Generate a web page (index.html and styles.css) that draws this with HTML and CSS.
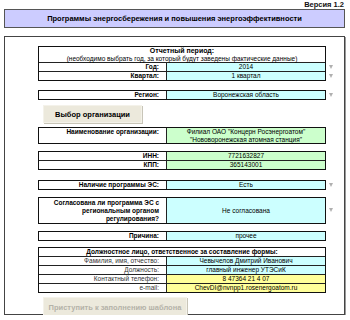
FILE: index.html
```html
<!DOCTYPE html>
<html lang="ru">
  <head>
    <meta charset="UTF-8" />
    <title>Программы энергосбережения</title>
    <link rel="stylesheet" href="styles.css">
  </head>
  <body>
    <div class="version">Версия 1.2</div>
    <div class="title">Программы энергосбережения и повышения энергоэффективности</div>

    <div class="panel">
      <div class="line">
        <div class="box period">
          <div class="head">
            <b>Отчетный период:</b>
            <span>(необходимо выбрать год, за который будут заведены фактические данные)</span>
          </div>
          <div class="row"><div class="lbl">Год:</div><div class="val cyan">2014</div></div>
          <div class="row"><div class="lbl">Квартал:</div><div class="val cyan">1 квартал</div></div>
        </div>
        <div class="arrows">
          <span class="arrow a-top"></span>
          <span class="arrow"></span>
        </div>
      </div>

      <div class="line gap-region">
        <div class="box">
          <div class="row"><div class="lbl">Регион:</div><div class="val cyan">Воронежская область</div></div>
        </div>
        <span class="arrow"></span>
      </div>

      <button class="btn btn-org" type="button">Выбор организации</button>

      <div class="line gap-org">
        <div class="box">
          <div class="row tall"><div class="lbl">Наименование организации:</div><div class="val green two">Филиал ОАО "Концерн Росэнергоатом"<br>"Нововоронежская атомная станция"</div></div>
        </div>
      </div>

      <div class="line gap-inn">
        <div class="box">
          <div class="row"><div class="lbl">ИНН:</div><div class="val green">7721632827</div></div>
          <div class="row"><div class="lbl">КПП:</div><div class="val green">365143001</div></div>
        </div>
      </div>

      <div class="line gap-prog">
        <div class="box">
          <div class="row"><div class="lbl">Наличие программы ЭС:</div><div class="val cyan">Есть</div></div>
        </div>
        <span class="arrow"></span>
      </div>

      <div class="line gap-agree">
        <div class="box">
          <div class="row agree"><div class="lbl multi">Согласована ли программа ЭС с<br>региональным органом<br>регулирования?</div><div class="val cyan">Не согласована</div></div>
        </div>
        <span class="arrow"></span>
      </div>

      <div class="line gap-reason">
        <div class="box">
          <div class="row"><div class="lbl">Причина:</div><div class="val cyan">прочее</div></div>
        </div>
      </div>

      <div class="line gap-person">
        <div class="box">
          <div class="row"><div class="full">Должностное лицо, ответственное за составление формы:</div></div>
          <div class="row"><div class="lbl thin">Фамилия, имя, отчество:</div><div class="val cyan">Чевычелов Дмитрий Иванович</div></div>
          <div class="row"><div class="lbl thin">Должность:</div><div class="val cyan">главный инженер УТЭСиК</div></div>
          <div class="row"><div class="lbl thin">Контактный телефон:</div><div class="val yellow">8 47364 21 4 07</div></div>
          <div class="row"><div class="lbl thin">e-mail:</div><div class="val yellow">ChevDI@nvnpp1.rosenergoatom.ru</div></div>
        </div>
      </div>

      <button class="btn btn-start" type="button" disabled>Приступить к заполнению шаблона</button>
    </div>
  </body>
</html>
```

FILE: styles.css
```css
body {
  margin: 0;
  padding: 0;
  background-color: #fff;
  font-family: "Liberation Sans", Arial, sans-serif;
  color: #000;
}
.version {
  height: 9px;
  padding-right: 6px;
  text-align: right;
  font-size: 7.5px;
  font-weight: bold;
  line-height: 10px;
  color: #111;
}
.title {
  margin: 0 5px 0 4px;
  height: 19px;
  box-sizing: border-box;
  background-color: #ccccff;
  border: 1px solid #555;
  text-align: center;
  font-size: 7.5px;
  font-weight: bold;
  line-height: 17px;
}
.panel {
  margin: 8px 5px 0 4px;
  height: 279px;
  box-sizing: border-box;
  border: 1px solid #444;
  box-shadow: 1px 1px 0 #999;
  padding: 9px 0 0 33px;
}
.line {
  display: flex;
  align-items: flex-start;
}
.box {
  width: 288px;
  box-sizing: border-box;
  border: 1px solid #111;
  font-size: 6.5px;
}
.head {
  height: 15px;
  border-bottom: 1px solid #222;
  display: flex;
  flex-direction: column;
  align-items: center;
  line-height: 7.5px;
}
.head b {
  font-size: 7px;
}
.row {
  display: grid;
  grid-template-columns: 128px 1fr;
  height: 8px;
  border-bottom: 1px solid #222;
  line-height: 8px;
}
.row:last-child {
  border-bottom: none;
}
.lbl {
  border-right: 1px solid #222;
  text-align: right;
  padding-right: 7px;
  font-weight: bold;
  white-space: nowrap;
}
.lbl.thin {
  font-weight: normal;
  color: #333;
}
.val {
  text-align: center;
  white-space: nowrap;
  overflow: hidden;
}
.full {
  grid-column: 1 / 3;
  text-align: center;
  font-weight: bold;
}
.cyan {
  background-color: #ccffff;
}
.green {
  background-color: #ccffcc;
}
.yellow {
  background-color: #ffff99;
}
.row.tall {
  height: 15px;
}
.two {
  line-height: 7.5px;
}
.row.agree {
  height: 25px;
}
.row.agree .val {
  line-height: 25px;
}
.lbl.multi {
  padding-top: 1px;
  line-height: 8px;
  overflow: hidden;
}
.arrows {
  display: flex;
  flex-direction: column;
}
.arrow {
  width: 0;
  height: 0;
  margin: 3px 0 0 3px;
  border-left: 2.5px solid transparent;
  border-right: 2.5px solid transparent;
  border-top: 4px solid #b0b0b0;
}
.arrows .arrow {
  margin-top: 5px;
}
.arrows .a-top {
  margin-top: 19px;
}
.gap-agree .arrow {
  margin-top: 11px;
}
.gap-region {
  margin-top: 9px;
}
.gap-org {
  margin-top: 4px;
}
.gap-inn {
  margin-top: 7px;
}
.gap-prog {
  margin-top: 10px;
}
.gap-agree {
  margin-top: 7px;
}
.gap-reason {
  margin-top: 7px;
}
.gap-person {
  margin-top: 6px;
}
.btn {
  display: block;
  margin: 5px 0 0 5px;
  padding: 0;
  background-color: #ece9dc;
  border: 1px solid #f4f2ea;
  box-shadow: 1px 1px 0 #c8c5b8;
  font-family: "Liberation Sans", Arial, sans-serif;
  font-weight: bold;
}
.btn-org {
  width: 99px;
  height: 18px;
  font-size: 7.5px;
  color: #000;
}
.btn-start {
  margin-top: 4px;
  width: 144px;
  height: 21px;
  font-size: 7.5px;
  color: #b4b2a8;
}
```
